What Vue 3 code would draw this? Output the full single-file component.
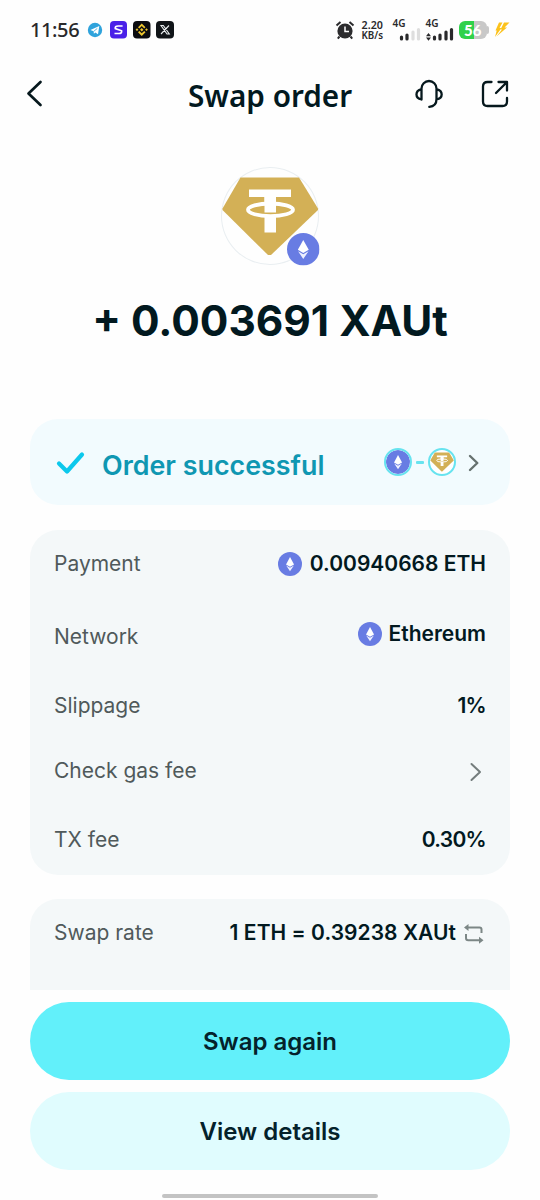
<script setup>
const rows = [
  { key: 'payment', label: 'Payment', value: '0.00940668 ETH', icon: true },
  { key: 'network', label: 'Network', value: 'Ethereum', icon: true },
  { key: 'slippage', label: 'Slippage', value: '1%' },
  { key: 'gas', label: 'Check gas fee', link: true },
  { key: 'tx', label: 'TX fee', value: '0.30%' },
]
</script>

<template>
  <div class="screen">
    <svg class="defs" aria-hidden="true">
      <symbol id="eth" viewBox="0 0 32 32">
        <circle cx="16" cy="16" r="16" fill="#687ce3" />
        <path d="M16 6.8 10.7 16.6 16 19.6 21.4 16.6Z" fill="#fff" />
        <path d="M10.9 18 16 20.9 21.2 18 16 25.6Z" fill="#eef0ff" />
      </symbol>
      <symbol id="xaut" viewBox="0 0 98 98">
        <path d="M19.5 10.5H78L97 41.5V43L50 88H47L1.500 43V41.500Z" fill="#d3b056" />
        <path d="M28 22.500H70V30H55V37.500H43.500V30H28Z" fill="#fff" />
        <path d="M43.500 30H55V45.500H43.500ZM43.500 49H55V65.500H43.500Z" fill="#fff" />
        <ellipse cx="49.500" cy="42.800" rx="22.500" ry="6.300" fill="none" stroke="#fff" stroke-width="3.800" />
      </symbol>
    </svg>

    <header class="status">
      <span class="time">11:56</span>
      <svg class="apps" viewBox="0 0 88 20" width="88" height="20">
        <circle cx="8" cy="10" r="7.200" fill="#2fa3dc" />
        <path d="M3.400 10 12.300 6 11 14.200 8.300 12.400 6.900 13.700 6.600 11.300Z" fill="#fff" />
        <path d="m6.700 11.400 3.600-3" stroke="#2fa3dc" stroke-width=".8" />
        <rect x="23" y="1" width="17" height="17.500" rx="4" fill="#4a20e8" />
        <path d="M35.600 6H31Q27.800 6 28.300 8.600L34.600 10.800Q35 13.500 32 13.500H27.500" fill="none" stroke="#fff" stroke-width="1.700" />
        <rect x="46" y="1" width="17.500" height="17.500" rx="4" fill="#0b0c10" />
        <g fill="#edc62f">
          <path d="m54.750 8 1.700 1.700-1.700 1.700-1.700-1.700ZM50 8.300l1.400 1.400L50 11.100l-1.400-1.400ZM59.500 8.300l1.400 1.400-1.400 1.400-1.400-1.400Z" />
          <path d="m51 7.200 3.750-3.700 3.750 3.700-1.300 1.300-2.450-2.400-2.450 2.400ZM51 12.200l1.300-1.300 2.450 2.400 2.450-2.400 1.300 1.300-3.750 3.700Z" />
        </g>
        <rect x="69" y="1" width="18" height="17.500" rx="4" fill="#101418" />
        <path d="M74 5.500H76.300L82.300 14H80ZM82 5.500 74 14" fill="none" stroke="#e9edef" stroke-width="1.100" />
      </svg>
      <svg class="alarm" viewBox="0 0 20 20" width="20" height="20">
        <circle cx="10" cy="11" r="7.600" fill="#2b2b2d" />
        <path d="M1.500 5.500 5.500 2M18.500 5.500 14.500 2M4.500 16.500 2.800 18.600M15.500 16.500l1.700 2.100" stroke="#2b2b2d" stroke-width="2" />
        <path d="M10 6.500V11.500H14" fill="none" stroke="#fff" stroke-width="1.500" />
      </svg>
      <span class="speed"><b>2.20</b><b class="unit">KB/s</b></span>
      <span class="net">
        <b>4G</b>
        <svg viewBox="0 0 28 14" width="28" height="14">
          <path d="M8.500 12v-2M14 12V8" stroke="#29292b" stroke-width="3.200" stroke-linecap="round" />
          <path d="M20 12V5M25.500 12V2.500" stroke="#dedede" stroke-width="3.200" stroke-linecap="round" />
        </svg>
      </span>
      <span class="net second">
        <b>4G</b>
        <svg viewBox="0 0 28 14" width="28" height="14">
          <path d="M2.500 6 5 9.200H0ZM2.500 13.700 5 10.500H0Z" fill="#29292b" />
          <path d="M8.500 12V10M14 12V8M20 12V5M25.500 12V2.500" stroke="#29292b" stroke-width="3.200" stroke-linecap="round" />
        </svg>
      </span>
      <span class="battery"><b>56</b></span>
      <svg class="bolt" viewBox="0 0 16 16" width="16" height="16">
        <path d="M5 .5H8.500L5.500 6H7.500L1 15 2.700 8.500H1.500Z" fill="#fcc21b" />
        <path d="M10 .5H15.500L10.500 5.500H13L2.500 14.500 8 7.500H6.500Z" fill="#fcc21b" />
      </svg>
    </header>

    <nav class="bar">
      <svg class="back" viewBox="0 0 18 28" width="18" height="28"><path d="M14.500 2 2.500 13.500 14.500 25" /></svg>
      <h1>Swap order</h1>
      <svg class="headset" viewBox="0 0 30 30" width="30" height="30">
        <path d="M7.500 20.500V9.500A7.500 7.500 0 0 1 22.500 9.500V20Q22.500 27.300 15.300 27.800M7.500 10.200C.8 12 .8 18.800 7.500 20.500M22.500 10.200C29.400 12 29.400 18.800 22.500 20.500" />
      </svg>
      <svg class="share" viewBox="0 0 30 30" width="30" height="30">
        <path d="M11.500 3H7.500Q3 3 3 7.500V22.500Q3 27 7.500 27H22.500Q27 27 27 22.500V19M18.500 3H27V11.500M26.500 3.500 16 14" />
      </svg>
    </nav>

    <section class="hero">
      <div class="coin">
        <svg class="token" viewBox="0 0 98 98"><use href="#xaut" /></svg>
        <svg class="badge" viewBox="0 0 32 32"><use href="#eth" /></svg>
      </div>
      <p class="amount">+ 0.003691 XAUt</p>
    </section>

    <section class="success">
      <svg class="check" viewBox="0 0 30 24" width="30" height="24"><path d="M3 12.500 11 20.500 26 3.500" /></svg>
      <span class="success-text">Order successful</span>
      <span class="pair">
        <svg class="mini" viewBox="0 0 32 32"><use href="#eth" /></svg>
        <i></i>
        <svg class="mini" viewBox="0 0 98 98"><use href="#xaut" /></svg>
      </span>
      <svg class="chev" viewBox="0 0 12 18" width="12" height="18"><path d="M2 2 9.300 9 2 16" /></svg>
    </section>

    <section class="card details">
      <div v-for="row in rows" :key="row.key" class="row" :class="row.key">
        <span class="label">{{ row.label }}</span>
        <span v-if="row.value" class="value">
          <svg v-if="row.icon" class="coin-sm" viewBox="0 0 32 32"><use href="#eth" /></svg>
          <span>{{ row.value }}</span>
        </span>
        <svg v-if="row.link" class="chev thin" viewBox="0 0 12 20" width="12" height="20"><path d="M1.500 2 10 10 1.500 18" /></svg>
      </div>
    </section>

    <section class="card rate">
      <div class="row">
        <span class="label">Swap rate</span>
        <span class="value">
          <span>1 ETH = 0.39238 XAUt</span>
          <svg class="repeat" viewBox="0 0 20 20" width="20" height="20">
            <path d="M4 3.500H15.500Q17.500 3.500 17.500 5.500V9M2 10V14Q2 16.300 4.300 16.300H16" />
            <path class="tip" d="M0 3.500 4.500 0V7ZM19.500 16.300 15 12.800V19.800Z" />
          </svg>
        </span>
      </div>
    </section>

    <footer class="actions">
      <button class="primary">Swap again</button>
      <button class="secondary">View details</button>
      <div class="home"></div>
    </footer>
  </div>
</template>

<style>
body { margin: 0; background: #fefefe; }
</style>

<style scoped>
.screen {
  box-sizing: border-box;
  display: flex;
  flex-direction: column;
  width: 540px;
  height: 1200px;
  overflow: hidden;
  padding: 0 30px;
  background: #fefefe;
  color: #02191f;
  font-family: Inter, "Liberation Sans", sans-serif;
}
svg { display: block; flex: none; overflow: visible; }
.defs { position: absolute; width: 0; height: 0; }

.status { display: flex; align-items: center; height: 60px; flex: none; color: #29292b; white-space: nowrap; }
.time { width: 58px; font: 500 20px/26px "Noto Sans", sans-serif; letter-spacing: -0.4px; }
.alarm { margin-left: 160px; }
.speed { display: flex; flex-direction: column; align-items: center; width: 23px; margin-left: 6px; font: 600 10.700px/10px "Noto Sans", sans-serif; }
.speed .unit { font-size: 9.800px; line-height: 11px; }
.speed b, .net b { font-weight: 600; }
.net { display: flex; flex-direction: column; width: 28px; margin-left: 9px; font: 600 10px/7px "Noto Sans", sans-serif; }
.net.second { margin-left: 5px; }
.battery { position: relative; display: flex; align-items: center; justify-content: center; width: 29px; height: 18px; margin-left: 5px; border-radius: 6px; background: linear-gradient(90deg, #2fd14b 55%, #c8c8c8 55%); color: #fff; font: 700 15px/18px Lato, sans-serif; }
.battery::after { content: ""; position: absolute; right: -2px; top: 5px; width: 2px; height: 8px; border-radius: 0 2px 2px 0; background: #c8c8c8; }
.bolt { margin-left: 7px; }

.bar { display: flex; align-items: center; height: 68px; flex: none; fill: none; stroke: #06181d; stroke-width: 2.300; stroke-linecap: round; stroke-linejoin: round; }
.back { margin-left: -4px; stroke-width: 2.700; }
h1 { margin: 3px 0 0 144px; width: 164px; font: 600 29.700px/40px "Noto Sans", sans-serif; white-space: nowrap; stroke: none; }
.headset { margin-left: 62px; }
.share { margin-left: 36px; }

.hero { display: flex; flex-direction: column; align-items: center; flex: none; height: 291px; }
.coin { position: relative; box-sizing: border-box; width: 98px; height: 98px; margin-top: 39px; }
.token { width: 98px; height: 98px; border-radius: 50%; box-shadow: inset 0 0 0 1px #e9eef1; }
.badge { position: absolute; left: 66px; top: 66px; width: 32.500px; height: 32.500px; }
.amount { margin: 31px 0 0; font-size: 42.400px; line-height: 50px; font-weight: 700; white-space: nowrap; }

.success { display: flex; align-items: center; flex: none; box-sizing: border-box; height: 86px; padding: 0 30px 0 26px; border-radius: 28px; background: #f2fbfe; }
.check { margin-top: 2px; fill: none; stroke: #0cc8ec; stroke-width: 4.200; stroke-linecap: round; stroke-linejoin: round; }
.success-text { margin-left: 16px; width: 225px; font-size: 26.850px; line-height: 34px; margin-top: 5px; font-weight: 600; color: #0f97b2; white-space: nowrap; }
.pair { display: flex; align-items: center; margin-left: auto; }
.mini { width: 24px; height: 24px; border: 2px solid #67e3ef; border-radius: 50%; background: #fff; overflow: hidden; }
.pair i { width: 8px; height: 3px; margin: 0 4px; background: #67e3ef; border-radius: 1px; }
.chev { margin-left: 12px; fill: none; stroke: #66716f; stroke-width: 2.400; stroke-linecap: round; stroke-linejoin: round; }
.success .chev { margin-right: 0; margin-top: 1px; }
.chev.thin { margin: 2px 4px 0 0; stroke: #747d7d; stroke-width: 2; }

.card { box-sizing: border-box; flex: none; padding: 0 24px; background: #f4f8f9; }
.details { height: 345px; margin-top: 25px; border-radius: 28px; }
.rate { height: 91px; margin-top: 24px; border-radius: 28px 28px 0 0; }
.row { display: flex; align-items: center; justify-content: space-between; box-sizing: border-box; height: 68px; font-size: 21px; line-height: 28px; white-space: nowrap; }
.network { height: 78px; }
.network .value { margin-bottom: 6px; }
.slippage { height: 60px; }
.gas { height: 70px; }
.label { color: #505a5b; }
.value { display: flex; align-items: center; font-weight: 600; }
.slippage .value, .tx .value { letter-spacing: -0.7px; }
.coin-sm { width: 24px; height: 24px; margin: 0 8px 0 0; }
.network .coin-sm { margin: 0 6px 0 0; }
.repeat { margin: 1px 2px 0 8px; fill: none; stroke: #7c8786; stroke-width: 2; }
.rate .value { letter-spacing: 0.05px; }
.repeat .tip { fill: #7c8786; stroke: none; }

.actions { display: flex; flex-direction: column; flex: none; gap: 12px; margin-top: 12px; }
button { height: 78px; padding: 2px 0 0; border: 0; border-radius: 39px; color: #04222b; font: 600 24px/30px Inter, sans-serif; }
.primary { background: #62f0fa; }
.secondary { background: #e0fcfe; }
.home { align-self: center; width: 216px; height: 4px; margin-top: 12px; border-radius: 2px; background: #c3c3c3; }
</style>
